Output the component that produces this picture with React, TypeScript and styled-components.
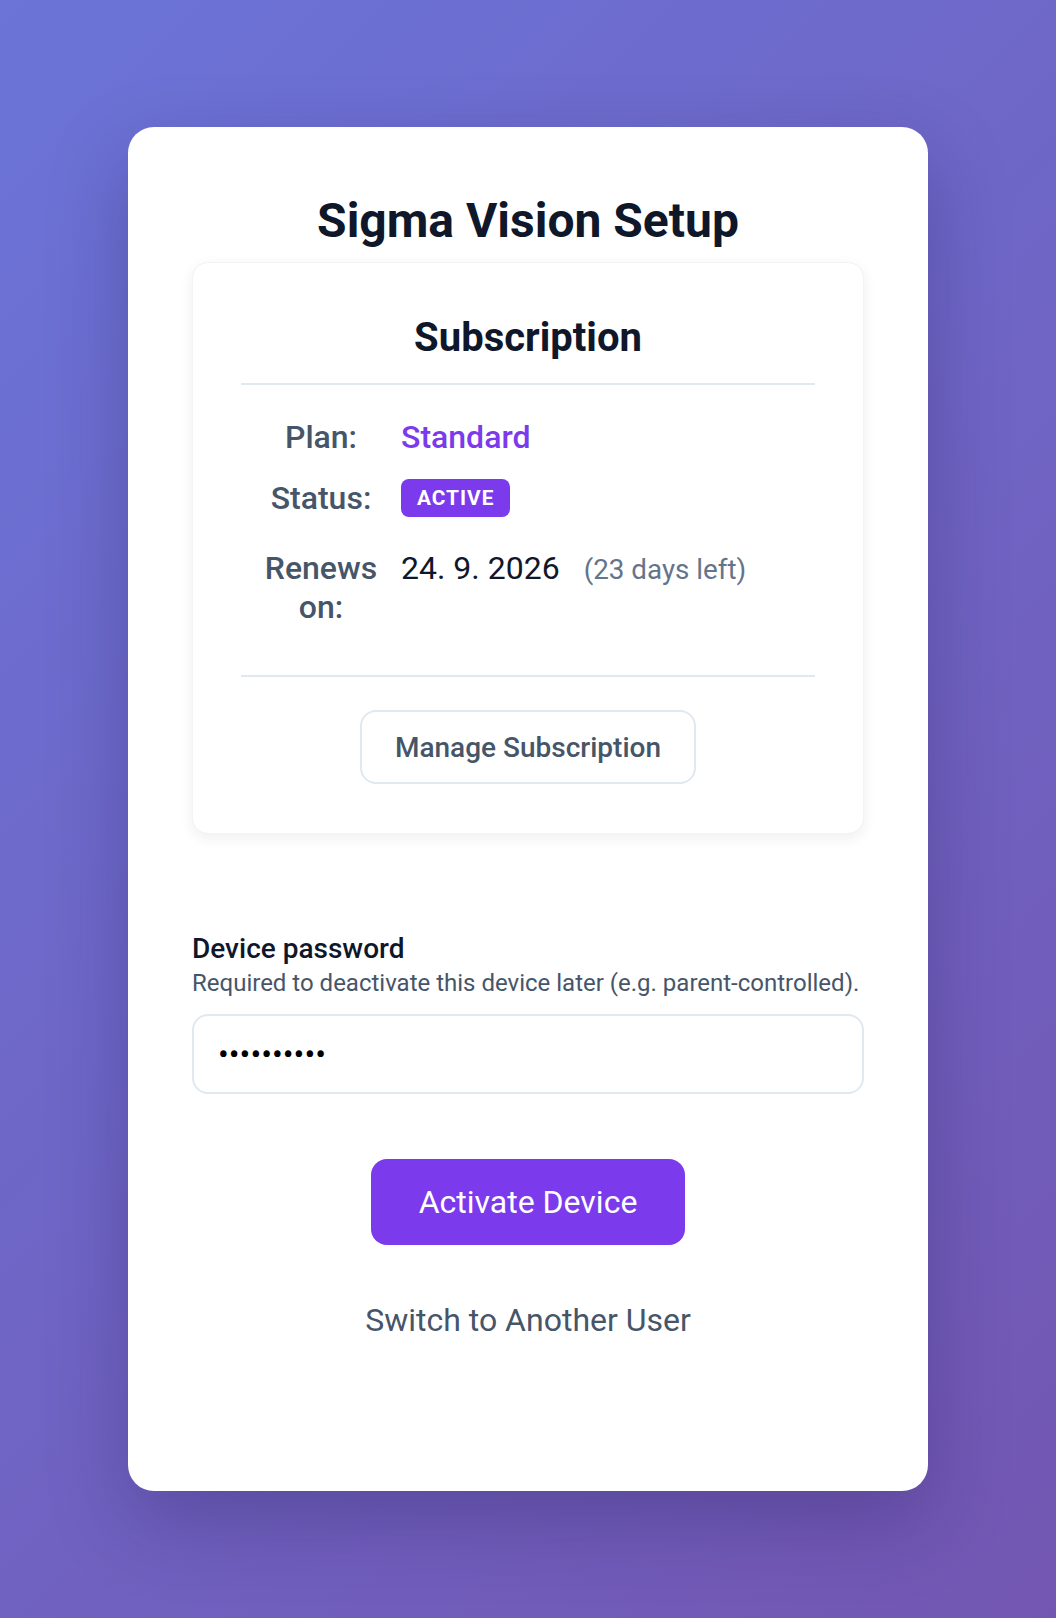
import React from "react";
import styled, { createGlobalStyle } from "styled-components";

const GlobalStyle = createGlobalStyle`
  html, body {
    margin: 0;
    padding: 0;
  }
  body {
    min-height: 100vh;
    background: linear-gradient(135deg, #6b74d8 0%, #7356b2 100%);
    font-family: Roboto, "Noto Sans", "Liberation Sans", sans-serif;
    -webkit-font-smoothing: antialiased;
  }
  * { box-sizing: border-box; }
`;

const Page = styled.main`
  min-height: 100vh;
  display: flex;
  align-items: center;
  justify-content: center;
`;

const Card = styled.section`
  width: 800px;
  background: #ffffff;
  border-radius: 26px;
  padding: 65.6px 64px 151.75px;
  box-shadow: 0 30px 80px rgba(30, 20, 80, 0.28);
  display: flex;
  flex-direction: column;
`;

const Title = styled.h1`
  margin: 0 0 13px;
  font-size: 48px;
  font-weight: 700;
  line-height: normal;
  color: #0f172a;
  text-align: center;
`;

const SubCard = styled.div`
  border: 1px solid #f1f3f7;
  border-radius: 16px;
  background: #ffffff;
  box-shadow: 0 4px 14px rgba(15, 23, 42, 0.07);
  padding: 50.3px 48px 49px;
  display: flex;
  flex-direction: column;
`;

const SubHeading = styled.h2`
  margin: 0;
  padding-bottom: 22px;
  border-bottom: 2px solid #e2e8f0;
  font-size: 40px;
  font-weight: 700;
  line-height: normal;
  color: #0f172a;
  text-align: center;
`;

const Details = styled.div`
  display: flex;
  flex-direction: column;
  gap: 23px;
  padding: 33px 0 49px;
  border-bottom: 2px solid #e2e8f0;
`;

const Row = styled.div<{ $spaced?: boolean }>`
  display: grid;
  grid-template-columns: 160px 1fr;
  margin-top: ${(p) => (p.$spaced ? "9px" : "0")};
  align-items: ${(p) => (p.$spaced ? "start" : "center")};
`;

const Label = styled.div`
  padding: 0 8px;
  text-align: center;
  font-size: 32px;
  font-weight: 500;
  line-height: 38.4px;
  color: #475569;
`;

const Value = styled.div<{ $accent?: boolean }>`
  font-size: 32px;
  font-weight: ${(p) => (p.$accent ? 500 : 400)};
  line-height: 38.4px;
  color: ${(p) => (p.$accent ? "#7c3aed" : "#0f172a")};
`;

const Badge = styled.span`
  justify-self: start;
  display: inline-block;
  background: #7c3aed;
  color: #ffffff;
  font-size: 20.8px;
  font-weight: 700;
  letter-spacing: 1px;
  line-height: normal;
  padding: 7.2px 16px;
  border-radius: 8px;
  text-transform: uppercase;
`;

const Remaining = styled.span`
  margin-left: 24px;
  font-size: 27.8px;
  color: #64748b;
`;

const ManageButton = styled.button`
  align-self: center;
  margin-top: 33px;
  background: #ffffff;
  border: 2px solid #e2e8f0;
  border-radius: 16px;
  padding: 18.6px 33px;
  font-family: inherit;
  font-size: 28px;
  font-weight: 500;
  line-height: normal;
  color: #475569;
  cursor: pointer;
`;

const Field = styled.div`
  margin-top: 98px;
  display: flex;
  flex-direction: column;
`;

const FieldLabel = styled.label`
  font-size: 28px;
  font-weight: 500;
  line-height: normal;
  color: #0f172a;
`;

const Hint = styled.p`
  margin: 4px 0 0;
  font-size: 24px;
  line-height: normal;
  color: #475569;
`;

const PasswordInput = styled.input`
  margin-top: 17px;
  height: 80px;
  width: 100%;
  border: 2px solid #e2e8f0;
  border-radius: 16px;
  padding: 0 24px;
  font-family: inherit;
  font-size: 32px;
  color: #000000;
  background: #ffffff;
  outline: none;
`;

const PrimaryButton = styled.button`
  align-self: center;
  margin-top: 65px;
  height: 86px;
  padding: 0 48px;
  border: none;
  border-radius: 16px;
  background: #7c3aed;
  color: #ffffff;
  font-family: inherit;
  font-size: 32px;
  font-weight: 400;
  cursor: pointer;
`;

const LinkButton = styled.button`
  align-self: center;
  margin-top: 56px;
  padding: 0;
  border: none;
  background: transparent;
  font-family: inherit;
  font-size: 32px;
  font-weight: 400;
  line-height: normal;
  color: #475569;
  cursor: pointer;
`;

export default function App() {
  return (
    <>
      <GlobalStyle />
      <Page>
        <Card>
          <Title>Sigma Vision Setup</Title>
          <SubCard>
            <SubHeading>Subscription</SubHeading>
            <Details>
              <Row>
                <Label>Plan:</Label>
                <Value $accent>Standard</Value>
              </Row>
              <Row>
                <Label>Status:</Label>
                <Badge>Active</Badge>
              </Row>
              <Row $spaced>
                <Label>Renews on:</Label>
                <Value>
                  24. 9. 2026<Remaining>(23 days left)</Remaining>
                </Value>
              </Row>
            </Details>
            <ManageButton type="button">Manage Subscription</ManageButton>
          </SubCard>
          <Field>
            <FieldLabel htmlFor="device-password">Device password</FieldLabel>
            <Hint>Required to deactivate this device later (e.g. parent-controlled).</Hint>
            <PasswordInput
              id="device-password"
              type="password"
              defaultValue="abcdefghij"
              readOnly
            />
          </Field>
          <PrimaryButton type="button">Activate Device</PrimaryButton>
          <LinkButton type="button">Switch to Another User</LinkButton>
        </Card>
      </Page>
    </>
  );
}
